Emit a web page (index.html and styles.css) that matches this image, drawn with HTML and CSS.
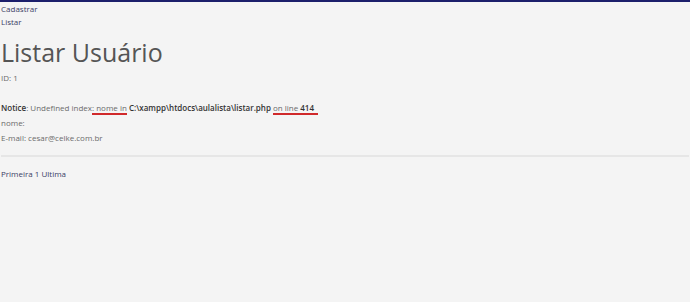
FILE: index.html
```html
<!DOCTYPE html>
<html lang="pt-br">
<head>
    <meta charset="UTF-8">
    <title>Listar</title>
    <link rel="stylesheet" href="styles.css">
</head>
<body>
    <nav class="menu">
        <a href="#" class="menu-link">Cadastrar</a>
        <a href="#" class="menu-link">Listar</a>
    </nav>
    <h1 class="title">Listar Usuário</h1>
    <div class="user">
        <p>ID: 1</p>
        <p class="blank">&nbsp;</p>
        <p class="notice"><b>Notice</b>: Undefined index<span class="mark">: nome in</span> <b class="file">C:\xampp\htdocs\aulalista\listar.php</b> <span class="mark">on line <b>414</b>&nbsp;&nbsp;</span></p>
        <p>nome: </p>
        <p>E-mail: cesar@celke.com.br</p>
    </div>
    <hr class="sep">
    <div class="pages">
        <a href="#">Primeira</a> <a href="#">1</a> <a href="#">Ultima</a>
    </div>
</body>
</html>
```

FILE: styles.css
```css
body {
    margin: 0;
    padding: 0 1px;
    background-color: #f4f4f4;
    border-top: 2px solid #1c1f6b;
    font-family: "Open Sans", sans-serif;
    font-size: 8px;
    line-height: 15px;
    color: #6b6b6b;
}

p {
    margin: 0;
}

a {
    color: #3c3f66;
    text-decoration: none;
}

.menu {
    display: flex;
    flex-direction: column;
    line-height: 13px;
}

.title {
    margin: 9px 0 3px;
    font-size: 25px;
    font-weight: 400;
    line-height: 30px;
    color: #555555;
}

.notice b {
    color: #333333;
    font-weight: 600;
}

.mark {
    border-bottom: 2px solid #d0292b;
}

.sep {
    margin: 10px 0 9px;
    border: none;
    border-top: 2px solid #e6e6e6;
}

.pages a {
    color: #3c3f66;
}
```
